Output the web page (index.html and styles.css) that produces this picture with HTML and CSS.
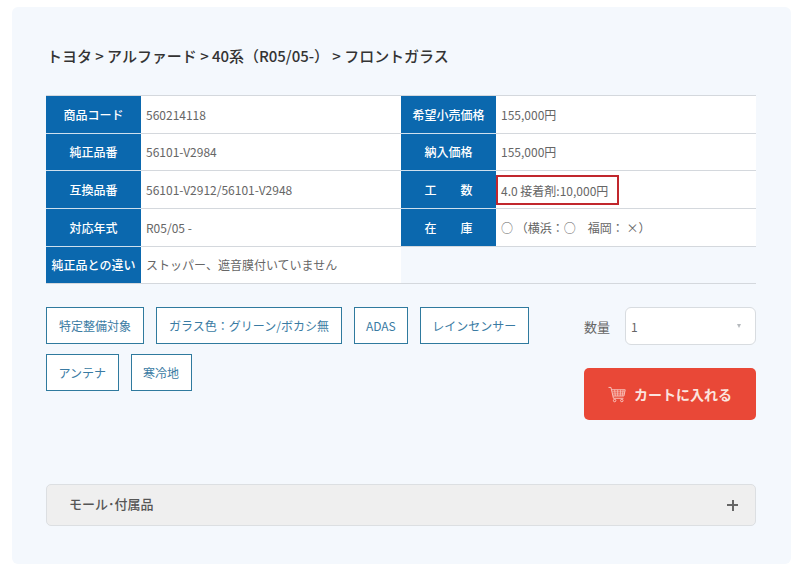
FILE: index.html
```html
<!DOCTYPE html>
<html lang="ja">
<head>
    <meta charset="UTF-8" />
    <title>フロントガラス</title>
    <link rel="stylesheet" href="styles.css">
</head>
<body>
    <div class="panel">
        <h1>トヨタ &gt; アルファード &gt; 40系（R05/05-） &gt; フロントガラス</h1>

        <table class="spec">
            <tr>
                <th>商品コード</th>
                <td>560214118</td>
                <th>希望小売価格</th>
                <td>155,000円</td>
            </tr>
            <tr>
                <th>純正品番</th>
                <td>56101-V2984</td>
                <th>納入価格</th>
                <td>155,000円</td>
            </tr>
            <tr>
                <th>互換品番</th>
                <td>56101-V2912/56101-V2948</td>
                <th>工　　数</th>
                <td class="mark-cell"><span class="mark">4.0 接着剤:10,000円</span></td>
            </tr>
            <tr>
                <th>対応年式</th>
                <td>R05/05 -</td>
                <th>在　　庫</th>
                <td>○ （横浜：○　福岡： ×）</td>
            </tr>
            <tr>
                <th class="tight">純正品との違い</th>
                <td>ストッパー、遮音膜付いていません</td>
                <td class="empty" colspan="2"></td>
            </tr>
        </table>

        <div class="buy-row">
            <div class="tags">
                <span class="tag">特定整備対象</span>
                <span class="tag">ガラス色：グリーン/ボカシ無</span>
                <span class="tag tag-short">ADAS</span>
                <span class="tag tag-mid">レインセンサー</span>
                <span class="tag tag-mid">アンテナ</span>
                <span class="tag tag-mid">寒冷地</span>
            </div>
            <div class="buy">
                <div class="qty">
                    <span class="qty-label">数量</span>
                    <div class="select">
                        <span>1</span>
                        <i class="caret"></i>
                    </div>
                </div>
                <button class="cart-btn">
                    <svg class="cart-icon" width="18" height="17" viewBox="0 0 19 18" fill="none" stroke="#f9c9c2" stroke-width="1">
                        <path d="M0.5 1.5h2.6l2.6 11.5h10.6" />
                        <path d="M3.8 4h14.4l-1.4 6.6H5.2" />
                        <path d="M4.4 6.2h13.2M4.8 8.4h12.4M7 4l0.7 6.6M10.2 4v6.6M13.4 4l-0.5 6.6M16 4l-1 6.6" stroke-width="0.8" />
                        <circle cx="7" cy="15.4" r="1.3" />
                        <circle cx="14.6" cy="15.4" r="1.3" />
                    </svg>
                    カートに入れる
                </button>
            </div>
        </div>

        <div class="accordion">
            <span class="accordion-title">モール･付属品</span>
            <span class="plus"></span>
        </div>
    </div>
</body>
</html>
```

FILE: styles.css
```css
* {
    box-sizing: border-box;
}
body {
    margin: 0;
    padding: 7px 9px 12px 12px;
    background-color: #fff;
    color: #666;
    font-family: "Noto Sans CJK JP", "Noto Sans", sans-serif;
    font-size: 12px;
}
.panel {
    height: 557px;
    padding: 38px 35px 0 34px;
    background-color: #f4f8fd;
    border-radius: 6px;
}
h1 {
    margin: 0 0 28px;
    padding-left: 1px;
    font-size: 15px;
    font-weight: 500;
    line-height: 22px;
    letter-spacing: -0.03px;
    color: #333;
}

/* 商品情報テーブル */
.spec {
    width: 100%;
    table-layout: fixed;
    border-collapse: collapse;
    border-top: 1px solid #d4d8dd;
    border-bottom: 1px solid #d4d8dd;
}
.spec tr {
    height: 37.5px;
}
.spec th {
    width: 95px;
    padding: 0;
    background-color: #0b68ae;
    border-top: 1px solid #cfe0ee;
    color: #fff;
    font-size: 12px;
    font-weight: 500;
    text-align: center;
}
.spec td {
    padding: 0 5px;
    background-color: #fff;
    border-top: 1px solid #d4d8dd;
    color: #666;
}
.spec tr:first-child th,
.spec tr:first-child td {
    border-top: 0;
}
.spec th.tight {
    white-space: nowrap;
}
.spec td.empty {
    background-color: transparent;
}
.spec td.mark-cell {
    padding: 4px 0 3px;
}
.mark {
    display: flex;
    align-items: center;
    width: 123px;
    height: 30px;
    padding-left: 3px;
    border: 2px solid #c1272d;
}

/* タグと購入欄 */
.buy-row {
    display: flex;
    justify-content: space-between;
    margin-top: 23px;
}
.tags {
    display: flex;
    flex-wrap: wrap;
    align-content: flex-start;
    gap: 10px 12px;
    width: 500px;
}
.tag {
    display: flex;
    align-items: center;
    height: 37px;
    padding: 0 12px;
    background-color: #fff;
    border: 1px solid #2f7a9e;
    color: #3a7ba3;
}
.tag-mid {
    padding: 0 11.5px;
}
.tag-short {
    padding: 0 11px;
}
.buy {
    width: 172px;
}
.qty {
    display: flex;
    align-items: center;
    justify-content: space-between;
}
.qty-label {
    font-size: 13px;
}
.select {
    display: flex;
    align-items: center;
    justify-content: space-between;
    width: 131px;
    height: 38px;
    padding: 0 14px 0 5px;
    background-color: #fff;
    border: 1px solid #d8dce0;
    border-radius: 6px;
}
.caret {
    border-top: 4px solid #b5b9bd;
    border-left: 2.5px solid transparent;
    border-right: 2.5px solid transparent;
}
.cart-btn {
    display: flex;
    align-items: center;
    justify-content: center;
    gap: 8px;
    width: 172px;
    height: 52px;
    margin-top: 23px;
    padding: 0;
    background-color: #e94837;
    border: none;
    border-radius: 5px;
    color: #fbe4df;
    font-family: inherit;
    font-size: 14px;
    font-weight: 700;
}

/* アコーディオン */
.accordion {
    display: flex;
    align-items: center;
    justify-content: space-between;
    height: 42px;
    margin-top: 64px;
    padding: 0 17px 0 22px;
    background-color: #efefef;
    border: 1px solid #dcdfe2;
    border-radius: 5px;
    font-size: 13px;
    font-weight: 500;
    color: #555;
}
.accordion-title {
    padding-bottom: 4px;
}
.plus {
    width: 11px;
    height: 11px;
    background:
        linear-gradient(#666, #666) center / 11px 2px no-repeat,
        linear-gradient(#666, #666) center / 2px 11px no-repeat;
}
```
